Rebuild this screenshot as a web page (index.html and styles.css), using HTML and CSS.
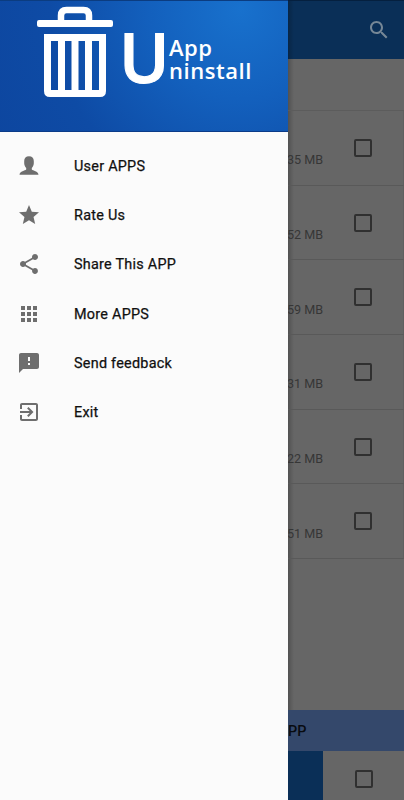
FILE: index.html
```
<!DOCTYPE html>
<html lang="en">
<head>
<meta charset="utf-8">
<title>App Uninstall</title>
<link rel="stylesheet" href="styles.css">
</head>
<body>
<div class="screen">
  <nav class="drawer">
    <header class="banner">
      <svg class="trash" width="76" height="92" viewBox="0 0 76 92">
        <path d="M24 15V9.500Q24 4 29.500 4H46.500Q52 4 52 9.500V15" fill="none" stroke="#fff" stroke-width="6.500"/>
        <rect x="0" y="14" width="76" height="7" rx="2" fill="#fff"/>
        <path fill="#fff" fill-rule="evenodd" d="M7 28H69V85Q69 91 63 91H13Q7 91 7 85ZM14 35V84H21V35ZM28 35V84H34.500V35ZM41.500 35V84H48V35ZM55 35V84H62V35Z"/>
      </svg>
      <span class="initial">U</span>
      <div class="brand"><span>App</span><span>ninstall</span></div>
    </header>
    <ul class="menu">
      <li><svg viewBox="0 0 24 24"><path d="M12 2.300c-3 0-4.800 2-4.800 4.700v2.300c0 1.800.8 3.500 2 4.700v1.600c-1 1.300-6.400 1.600-6.700 5.200h19c-.3-3.600-5.700-3.900-6.700-5.200V14c1.200-1.200 2-2.900 2-4.700V7c0-2.700-1.800-4.700-4.800-4.700z"/></svg><span>User APPS</span></li>
      <li><svg viewBox="0 0 24 24"><path d="M12 17.270 18.180 21l-1.640-7.030L22 9.240l-7.190-.61L12 2 9.190 8.630 2 9.240l5.460 4.730L5.820 21z"/></svg><span>Rate Us</span></li>
      <li><svg viewBox="0 0 24 24"><path d="M18 16.080c-.76 0-1.440.3-1.960.77L8.910 12.700c.05-.23.09-.46.09-.7s-.04-.47-.09-.7l7.050-4.110c.54.5 1.250.81 2.040.81 1.660 0 3-1.340 3-3s-1.340-3-3-3-3 1.340-3 3c0 .24.04.47.09.7L8.040 9.810C7.500 9.310 6.790 9 6 9c-1.660 0-3 1.340-3 3s1.340 3 3 3c.79 0 1.500-.31 2.040-.81l7.120 4.160c-.05.21-.08.43-.08.65 0 1.610 1.310 2.920 2.920 2.920s2.920-1.310 2.920-2.920-1.310-2.920-2.920-2.920z"/></svg><span>Share This APP</span></li>
      <li><svg viewBox="0 0 24 24"><path d="M4 8h4V4H4zm6 12h4v-4h-4zm-6 0h4v-4H4zm0-6h4v-4H4zm6 0h4v-4h-4zm6-10v4h4V4zm-6 4h4V4h-4zm6 6h4v-4h-4zm0 6h4v-4h-4z"/></svg><span>More APPS</span></li>
      <li><svg viewBox="0 0 24 24"><path d="M20 2H4c-1.100 0-1.990.9-1.990 2L2 22l4-4h14c1.100 0 2-.9 2-2V4c0-1.100-.9-2-2-2zm-7 12h-2v-2h2zm0-4h-2V6h2z"/></svg><span>Send feedback</span></li>
      <li><svg viewBox="0 0 24 24"><path d="M10.090 15.590 11.500 17l5-5-5-5-1.410 1.410L12.670 11H3v2h9.670zM19 3H5c-1.110 0-2 .9-2 2v4h2V5h14v14H5v-4H3v4c0 1.100.89 2 2 2h14c1.100 0 2-.9 2-2V5c0-1.100-.9-2-2-2z"/></svg><span>Exit</span></li>
    </ul>
  </nav>
  <main class="content">
    <div class="appbar"><svg viewBox="0 0 24 24"><path d="M15.500 14h-.79l-.28-.27C15.410 12.590 16 11.110 16 9.500 16 5.910 13.090 3 9.500 3S3 5.910 3 9.500 5.910 16 9.500 16c1.610 0 3.090-.59 4.230-1.570l.27.28v.79l5 4.990L20.490 19zm-6 0C7.010 14 5 11.990 5 9.500S7.010 5 9.500 5 14 7.010 14 9.500 11.990 14 9.500 14z"/></svg></div>
    <div class="summary"></div>
    <div class="row"><span class="size">35 MB</span><i class="check"></i></div>
    <div class="row"><span class="size">52 MB</span><i class="check"></i></div>
    <div class="row"><span class="size">59 MB</span><i class="check"></i></div>
    <div class="row"><span class="size">31 MB</span><i class="check"></i></div>
    <div class="row"><span class="size">22 MB</span><i class="check"></i></div>
    <div class="row"><span class="size">51 MB</span><i class="check"></i></div>
    <div class="spacer"></div>
    <div class="strip"><span>PP</span></div>
    <div class="footer"><div class="action"></div><i class="check"></i></div>
  </main>
</div>
</body>
</html>
```
FILE: styles.css
```
* { box-sizing: border-box; }
body { margin: 0; font-family: Roboto, sans-serif; }
.screen { display: flex; width: 404px; height: 800px; overflow: hidden; background: #666; }
.drawer { width: 288px; height: 800px; flex: none; background: #fbfbfb; }
.banner {
  display: flex;
  align-items: flex-start;
  height: 132px;
  padding: 5px 0 0 37px;
  color: #fff;
  background: radial-gradient(circle at 240px 8px, #1871cd 0, #1360bd 90px, #0e4ba5 190px, #0d459e 290px);
  border-top: 1px solid #0b3c80;
  border-bottom: 1px solid #0b3b88;
}
.trash { flex: none; }
.initial {
  width: 52px;
  padding-left: 6px;
  margin-top: 11px;
  font: 600 68px/80px "Open Sans", sans-serif;
  -webkit-text-stroke: 1px #fff;
}
.brand {
  display: flex;
  flex-direction: column;
  margin: 30px 0 0 4px;
  font: 600 22px/23px "Open Sans", sans-serif;
  letter-spacing: .55px;
}
.menu { list-style: none; margin: 0; padding: 9px 0 0; }
.menu li {
  display: flex;
  align-items: center;
  height: 49.300px;
  padding-left: 17px;
  font-size: 14.400px;
  font-weight: 400;
  -webkit-text-stroke: .25px #101010;
  letter-spacing: .26px;
  color: #101010;
}
.menu svg { width: 24px; height: 24px; margin-right: 33px; fill: #6e6e6e; }
.menu span { padding-top: 1px; }
.content {
  display: flex;
  flex-direction: column;
  width: 116px;
  height: 800px;
  background: linear-gradient(90deg, #0003, transparent 6px), #666;
}
.appbar { display: flex; justify-content: flex-end; height: 59px; padding: 17px 13px 0 0; background: linear-gradient(90deg, #0003, transparent 6px), #0a2f57; border-top: 1px solid #05203f; }
.appbar svg { width: 24px; height: 24px; fill: #768796; }
.summary { height: 52px; border-bottom: 1px solid #5c5c5c; }
.row { display: flex; align-items: center; height: 74.700px; border-bottom: 1px solid #595959; border-right: 1px solid #5f5f5f; }
.size {
  display: flex;
  justify-content: flex-end;
  width: 35px;
  margin: 25px 31px 0 0;
  overflow: hidden;
  white-space: nowrap;
  font-size: 12.600px;
  line-height: 16px;
  color: #363636;
}
.check { display: block; flex: none; width: 18px; height: 18px; border: 2px solid #303030; border-radius: 2px; }
.spacer { flex: 1; }
.strip { display: flex; align-items: center; height: 41px; padding-top: 2px; background: #34486b; overflow: hidden; font-size: 14.400px; font-weight: 500; color: #080b10; }
.footer { display: flex; align-items: center; height: 49px; }
.action { width: 35px; height: 49px; margin-right: 32px; background: #0a2f57; }
.footer .check { margin-top: 6px; }
```
